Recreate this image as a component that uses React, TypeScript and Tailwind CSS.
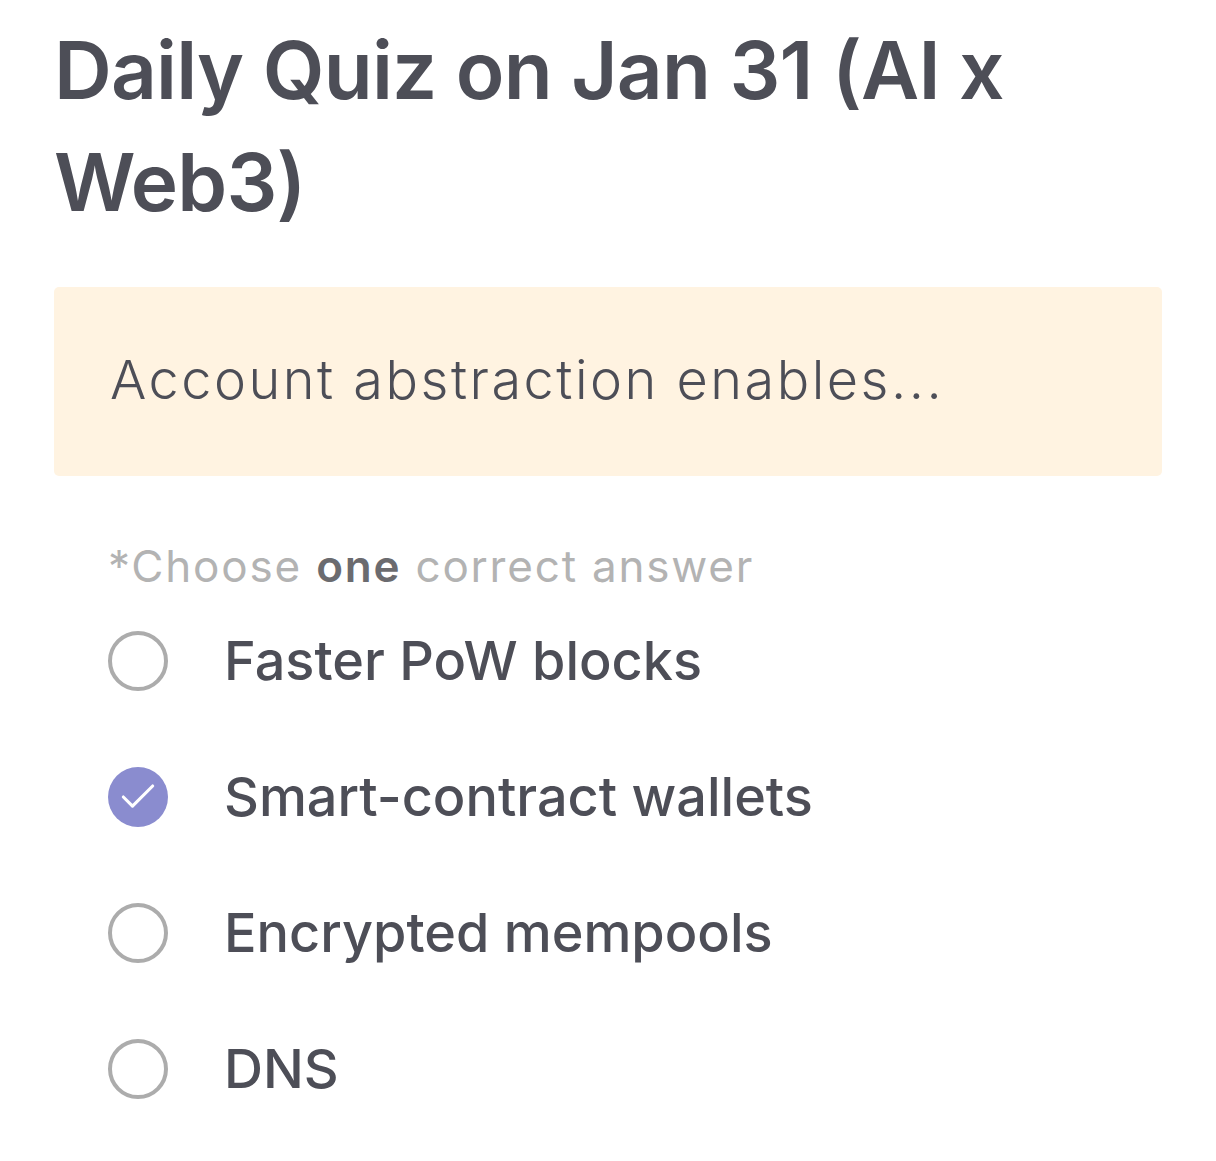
import { Check } from "lucide-react"

const options = [
    { label: "Faster PoW blocks", checked: false },
    { label: "Smart-contract wallets", checked: true },
    { label: "Encrypted mempools", checked: false },
    { label: "DNS", checked: false },
]

export default function App() {
    return (
        <div className="min-h-[1161px] bg-white px-[54px] pt-[14px] text-[#4d4e57]" style={{ fontFamily: "Inter, 'Noto Sans', sans-serif" }}>
            <h1 className="text-[80px] font-semibold leading-[112px] tracking-[-0.8px] pr-[150px]">
                Daily Quiz on Jan 31 (AI x Web3)
            </h1>

            <div className="mt-[49px] h-[189px] rounded-[5px] bg-[#fff3e1] pl-[56px] flex items-center">
                <p className="text-[54px] font-light leading-none tracking-[2.5px] -mt-[4px]">Account abstraction enables...</p>
            </div>

            <div className="pl-[54px] pt-[68px]">
                <p className="text-[44px] leading-none tracking-[1.8px] text-[#b3b3b3]">
                    *Choose <span className="font-semibold text-[#6b6b6f]">one</span> correct answer
                </p>

                <div className="mt-[43px] flex flex-col gap-[76px]">
                    {options.map((o) => (
                        <div key={o.label} className="flex items-center h-[60px]">
                            {o.checked ? (
                                <div className="w-[60px] h-[60px] rounded-full bg-[#8a8ccf] flex items-center justify-center">
                                    <Check className="w-[44px] h-[44px] text-white" strokeWidth={1.7} />
                                </div>
                            ) : (
                                <div className="w-[60px] h-[60px] rounded-full border-[4px] border-[#acacac]" />
                            )}
                            <span className="ml-[56px] text-[54px] font-medium leading-none">{o.label}</span>
                        </div>
                    ))}
                </div>
            </div>
        </div>
    )
}
